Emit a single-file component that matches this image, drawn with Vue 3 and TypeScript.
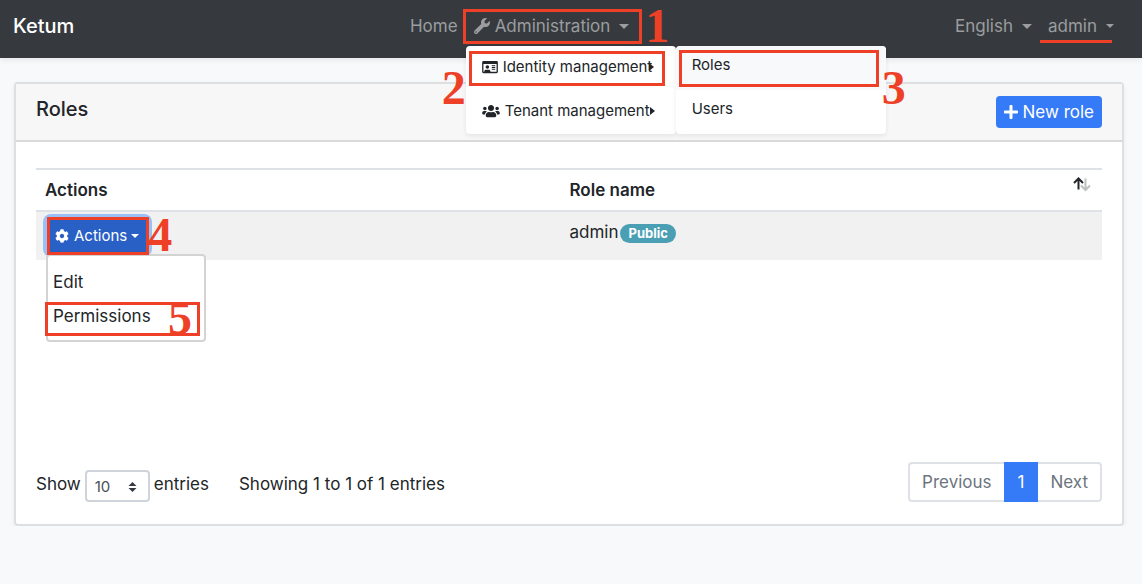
<script setup lang="ts">
import { ref } from 'vue'

const pageSize = ref('10')
const columns = ['Actions', 'Role name']

const icons = {
  wrench: {
    box: '0 0 512 512',
    d: 'M507.73 109.1c-2.24-9.03-13.54-12.09-20.12-5.51l-74.36 74.36-67.88-11.31-11.31-67.88 74.36-74.36c6.62-6.62 3.43-17.9-5.66-20.16-47.38-11.74-99.55.91-136.58 37.93-39.64 39.64-50.55 97.1-34.05 147.2L18.74 402.76c-24.99 24.99-24.99 65.51 0 90.5 24.99 24.99 65.51 24.99 90.5 0l213.21-213.21c50.12 16.71 107.47 5.68 147.37-34.22 37.07-37.07 49.7-89.32 37.91-136.73zM64 472c-13.25 0-24-10.75-24-24 0-13.26 10.75-24 24-24s24 10.74 24 24c0 13.25-10.75 24-24 24z',
  },
  card: {
    box: '0 0 576 512',
    d: 'M528 32H48C21.5 32 0 53.5 0 80v352c0 26.5 21.5 48 48 48h480c26.5 0 48-21.5 48-48V80c0-26.5-21.5-48-48-48zm0 400H303.2c.9-4.5.8 3.6.8-22.4 0-31.8-30.1-57.6-67.2-57.6-10.8 0-18.7 8-44.8 8-26.9 0-33.4-8-44.8-8-37.1 0-67.2 25.8-67.2 57.6 0 26-.2 17.9.8 22.4H48V144h480v288zm-168-80h112c4.4 0 8-3.6 8-8v-16c0-4.4-3.6-8-8-8H360c-4.4 0-8 3.6-8 8v16c0 4.4 3.6 8 8 8zm0-64h112c4.4 0 8-3.6 8-8v-16c0-4.4-3.6-8-8-8H360c-4.4 0-8 3.6-8 8v16c0 4.4 3.6 8 8 8zm0-64h112c4.4 0 8-3.6 8-8v-16c0-4.4-3.6-8-8-8H360c-4.4 0-8 3.6-8 8v16c0 4.4 3.6 8 8 8zm-168 96c35.3 0 64-28.7 64-64s-28.7-64-64-64-64 28.7-64 64 28.7 64 64 64z',
  },
  users: {
    box: '0 0 640 512',
    d: 'M96 224c35.3 0 64-28.7 64-64s-28.7-64-64-64-64 28.7-64 64 28.7 64 64 64zm448 0c35.3 0 64-28.7 64-64s-28.7-64-64-64-64 28.7-64 64 28.7 64 64 64zm32 32h-64c-17.6 0-33.5 7.1-45.1 18.6 40.3 22.1 68.9 62 75.1 109.4h66c17.7 0 32-14.3 32-32v-32c0-35.3-28.7-64-64-64zm-256 0c61.9 0 112-50.1 112-112S381.9 32 320 32 208 82.1 208 144s50.1 112 112 112zm76.8 32h-8.3c-20.8 10-43.9 16-68.5 16s-47.6-6-68.5-16h-8.3C179.6 288 128 339.6 128 403.2V432c0 26.5 21.5 48 48 48h288c26.5 0 48-21.5 48-48v-28.8c0-63.6-51.6-115.2-115.2-115.2zm-223.7-13.4C161.5 263.1 145.6 256 128 256H64c-35.3 0-64 28.7-64 64v32c0 17.7 14.3 32 32 32h65.9c6.3-47.4 34.9-87.3 75.2-109.4z',
  },
  plus: {
    box: '0 0 448 512',
    d: 'M416 208H272V64c0-17.67-14.33-32-32-32h-32c-17.67 0-32 14.33-32 32v144H32c-17.67 0-32 14.33-32 32v32c0 17.67 14.33 32 32 32h144v144c0 17.67 14.33 32 32 32h32c17.67 0 32-14.33 32-32V304h144c17.67 0 32-14.33 32-32v-32c0-17.67-14.33-32-32-32z',
  },
  cog: {
    box: '0 0 512 512',
    d: 'M487.4 315.7l-42.6-24.6c4.3-23.2 4.3-47 0-70.2l42.6-24.6c4.9-2.8 7.1-8.6 5.5-14-11.1-35.6-30-67.8-54.7-94.6-3.8-4.1-10-5.1-14.8-2.3L380.8 110c-17.9-15.4-38.5-27.3-60.8-35.1V25.8c0-5.6-3.9-10.5-9.4-11.7-36.7-8.2-74.3-7.8-109.2 0-5.5 1.2-9.4 6.1-9.4 11.7V75c-22.2 7.9-42.8 19.8-60.8 35.1L88.7 85.5c-4.9-2.8-11-1.9-14.8 2.3-24.7 26.7-43.6 58.9-54.7 94.6-1.7 5.4.6 11.2 5.5 14L67.3 221c-4.3 23.2-4.3 47 0 70.2l-42.6 24.6c-4.9 2.8-7.1 8.6-5.5 14 11.1 35.6 30 67.8 54.7 94.6 3.8 4.1 10 5.1 14.8 2.3l42.6-24.6c17.9 15.4 38.5 27.3 60.8 35.1v49.2c0 5.6 3.9 10.5 9.4 11.7 36.7 8.2 74.3 7.8 109.2 0 5.5-1.2 9.4-6.1 9.4-11.7v-49.2c22.2-7.9 42.8-19.8 60.8-35.1l42.6 24.6c4.9 2.8 11 1.9 14.8-2.3 24.7-26.7 43.6-58.9 54.7-94.6 1.5-5.5-.7-11.3-5.6-14.1zM256 336c-44.1 0-80-35.9-80-80s35.9-80 80-80 80 35.9 80 80-35.9 80-80 80z',
  },
}
</script>

<template>
  <div class="page">
    <nav class="navbar">
      <a class="brand" href="#">Ketum</a>
      <ul class="nav main-nav">
        <li><a class="nav-link" href="#">Home</a></li>
        <li>
          <a class="nav-link" href="#">
            <svg class="icon wrench" :viewBox="icons.wrench.box"><path :d="icons.wrench.d" /></svg>
            <span>Administration</span>
            <i class="caret"></i>
          </a>
          <span class="mark mark-1"></span>
          <b class="step step-1">1</b>
          <div class="menu">
            <div class="submenu-host">
              <a class="menu-item" href="#">
                <svg class="icon card-icon" :viewBox="icons.card.box"><path :d="icons.card.d" /></svg>
                <span>Identity management</span>
                <i class="caret-right overlap"></i>
              </a>
              <span class="mark mark-2"></span>
              <b class="step step-2">2</b>
              <div class="menu submenu">
                <a class="menu-item active" href="#">Roles<span class="mark mark-3"></span></a>
                <a class="menu-item" href="#">Users</a>
                <b class="step step-3">3</b>
              </div>
            </div>
            <a class="menu-item" href="#">
              <svg class="icon users-icon" :viewBox="icons.users.box"><path :d="icons.users.d" /></svg>
              <span>Tenant management</span>
              <i class="caret-right"></i>
            </a>
          </div>
        </li>
      </ul>
      <ul class="nav">
        <li><a class="nav-link" href="#"><span>English</span><i class="caret"></i></a></li>
        <li class="underlined"><a class="nav-link" href="#"><span>admin</span><i class="caret small"></i></a></li>
      </ul>
    </nav>

    <main class="content">
      <section class="card">
        <header class="card-header">
          <h1>Roles</h1>
          <button class="primary" type="button">
            <svg class="icon plus" :viewBox="icons.plus.box"><path :d="icons.plus.d" /></svg>
            <span>New role</span>
          </button>
        </header>
        <div class="card-body">
          <table>
            <thead>
              <tr>
                <th v-for="c in columns" :key="c" scope="col">
                  {{ c }}
                  <svg v-if="c === 'Role name'" class="sort" viewBox="0 0 20 16" fill="none" stroke-width="2">
                    <path d="M13.500 2.500v11M9 9.500l4.500 4.500l4.500-4.500" stroke="#bfc0c1" />
                    <path d="M6.500 13.500v-11M2 7l4.500-4.500l4.500 4.500" stroke="#212529" />
                  </svg>
                </th>
              </tr>
            </thead>
            <tbody>
              <tr>
                <td>
                  <div class="row-actions">
                    <button class="action-btn" type="button">
                      <svg class="icon cog" :viewBox="icons.cog.box"><path :d="icons.cog.d" /></svg>
                      <span>Actions</span>
                      <i class="caret small"></i>
                    </button>
                    <span class="mark mark-4"></span>
                    <b class="step step-4">4</b>
                    <div class="action-menu">
                      <a href="#">Edit</a>
                      <a class="marked" href="#">Permissions<span class="mark mark-5"></span><b class="step step-5">5</b></a>
                    </div>
                  </div>
                </td>
                <td class="role">admin<span class="badge">Public</span></td>
              </tr>
            </tbody>
          </table>
          <footer class="table-footer">
            <label class="length">
              <span class="length-text">Show</span>
              <span class="select-wrap">
                <select v-model="pageSize">
                  <option>10</option>
                  <option>25</option>
                  <option>50</option>
                </select>
                <svg viewBox="0 0 8 10"><path d="M4 0l4 4H0zM4 10L0 6h8z" /></svg>
              </span>
              <span class="length-text">entries</span>
            </label>
            <span class="info">Showing 1 to 1 of 1 entries</span>
            <div class="pagination">
              <button type="button">Previous</button>
              <button class="current" type="button">1</button>
              <button type="button">Next</button>
            </div>
          </footer>
        </div>
      </section>
    </main>
  </div>
</template>

<style>
body {
  background: #f8f9fb;
}
</style>

<style scoped>
.page,
.page * {
  box-sizing: border-box;
}
.page {
  font-family: Inter, 'Liberation Sans', sans-serif;
  font-size: 17px;
  line-height: 24px;
  color: #212529;
}
button,
select {
  font: inherit;
}
a {
  color: inherit;
  text-decoration: none;
}
.icon {
  fill: currentColor;
  flex: none;
}
.caret {
  flex: none;
  border: 5px solid transparent;
  border-top-color: currentColor;
  border-bottom: 0;
}
.caret.small {
  border-width: 4px;
  border-bottom: 0;
}
.caret-right {
  flex: none;
  border: 4px solid transparent;
  border-left: 5px solid currentColor;
  border-right: 0;
}
.caret-right.overlap {
  margin-left: -3px;
}

/* navigation */
.navbar {
  position: relative;
  z-index: 5;
  display: flex;
  align-items: center;
  height: 58px;
  padding: 0 20px 6px 13px;
  background: #363a3e;
  box-shadow: 0 2px 6px rgba(0, 0, 0, 0.08);
}
.brand {
  color: #fff;
  font-size: 20px;
  font-weight: 500;
}
.nav {
  display: flex;
  margin: 0;
  padding: 0;
  list-style: none;
}
.main-nav {
  margin: 0 auto;
  padding-left: 18px;
}
.nav li {
  position: relative;
}
.nav-link {
  display: flex;
  align-items: center;
  padding: 8px;
  color: #9b9d9f;
}
.nav-link .caret {
  margin-left: 9px;
}
.wrench {
  width: 16px;
  height: 16px;
  margin-right: 5px;
}
.underlined::after {
  content: '';
  position: absolute;
  left: 0;
  right: 10px;
  bottom: 3px;
  height: 3px;
  background: #ee4026;
}
.menu {
  position: absolute;
  top: 40px;
  left: 0;
  width: 210px;
  background: #fff;
  border-radius: 4px;
  color: #212529;
  box-shadow: 0 2px 5px rgba(0, 0, 0, 0.08);
}
.submenu {
  top: 0;
  left: 100%;
}
.menu-item {
  position: relative;
  display: flex;
  align-items: center;
  height: 44px;
  padding: 0 16px 2px;
  font-size: 15px;
  line-height: 20px;
  white-space: nowrap;
}
.submenu .menu-item {
  padding-bottom: 6px;
}
.menu-item.active {
  background: #f8f9fb;
  border-radius: 4px 4px 0 0;
}
.card-icon {
  width: 16px;
  height: 14px;
  margin-right: 5px;
}
.users-icon {
  width: 18px;
  height: 14px;
  margin-right: 5px;
}
.submenu-host {
  position: relative;
}

/* numbered annotations */
.mark {
  position: absolute;
  border: 3px solid #ee4026;
  pointer-events: none;
}
.mark-1 { inset: 3px -5px 2px -3px; }
.mark-2 { inset: 5px 11px 4px 3px; }
.mark-3 { inset: 4px 7px 3px 3px; }
.mark-4 { inset: -1px -1px -2px 0; }
.mark-5 { inset: 1px 4px -1px -3px; }
.step {
  position: absolute;
  color: #ee4026;
  font-family: 'Liberation Serif', serif;
  font-size: 48px;
  font-weight: 700;
  line-height: 46px;
}
.step-1 { left: 100%; top: -3px; margin-left: 8px; }
.step-2 { right: 100%; top: 19px; }
.step-3 { left: 100%; top: 19px; margin-left: -4px; }
.step-4 { left: 100%; top: -6px; }
.step-5 { right: 12px; top: -6px; }

/* card */
.content {
  padding: 24px 18px 0 14px;
}
.card {
  background: #fff;
  border: 2px solid #dedfe0;
  border-radius: 4px;
  box-shadow: 0 2px 5px rgba(0, 0, 0, 0.06);
}
.card-header {
  display: flex;
  justify-content: space-between;
  align-items: flex-start;
  padding: 12px 20px;
  background: #f7f7f7;
  border-bottom: 2px solid #d8d9da;
}
h1 {
  margin: 0;
  font-size: 20px;
  line-height: 26px;
  font-weight: 500;
}
.primary {
  display: flex;
  align-items: center;
  height: 32px;
  padding: 0 8px;
  border: 0;
  border-radius: 4px;
  background: #357af6;
  color: #fff;
}
.plus {
  width: 14px;
  height: 16px;
  margin-right: 5px;
}
.card-body {
  padding: 26px 20px 22px;
}
table {
  width: 100%;
  border-collapse: collapse;
  table-layout: fixed;
}
th {
  position: relative;
  height: 42px;
  padding: 0 9px;
  border-top: 2px solid #dee2e6;
  border-bottom: 2px solid #dee2e6;
  text-align: left;
  font-weight: 600;
}
th:first-child {
  width: 49.2%;
}
.sort {
  position: absolute;
  right: 10px;
  top: 6px;
  width: 20px;
  height: 16px;
}
td {
  height: 49px;
  padding: 6px 9px 4px;
  background: #f1f1f1;
  vertical-align: top;
}
td.role {
  padding-top: 8px;
}
.badge {
  display: inline-block;
  height: 19px;
  margin-left: 2px;
  padding: 0 8px;
  border-radius: 10px;
  background: #4b9fb5;
  color: #fff;
  font-size: 13px;
  line-height: 18px;
  font-weight: 700;
}
.row-actions {
  position: relative;
  width: max-content;
  margin-left: 2px;
}
.action-btn {
  display: flex;
  align-items: center;
  height: 35px;
  padding: 0 9px 0 8px;
  border: 0;
  border-radius: 4px;
  background: #2860c6;
  box-shadow: 0 0 0 4px #9ac0f8;
  color: #fff;
  font-size: 15px;
}
.cog {
  width: 14px;
  height: 14px;
  margin-right: 5px;
}
.action-btn .caret {
  margin-left: 4px;
}
.action-menu {
  position: absolute;
  z-index: 1;
  top: 36px;
  left: -1px;
  width: 160px;
  padding: 9px 0 5px;
  background: #fff;
  border: 2px solid #d3d3d3;
  border-radius: 4px;
}
.mark-4,
.step-4 {
  z-index: 2;
}
.action-menu a {
  position: relative;
  display: block;
  height: 36px;
  padding: 5px;
}
.action-menu .marked {
  height: 34px;
  padding-top: 3px;
}
.table-footer {
  display: flex;
  align-items: flex-end;
  margin-top: 202px;
}
.length {
  display: flex;
  align-items: center;
  gap: 4px;
  margin-right: 30px;
}
.length-text {
  padding-bottom: 4px;
}
.info {
  padding-bottom: 6px;
}
.select-wrap {
  position: relative;
  display: flex;
}
select {
  appearance: none;
  width: 65px;
  height: 32px;
  padding: 2px 8px 0;
  border: 2px solid #ced4da;
  border-radius: 4px;
  background: #fff;
  color: #495057;
  font-size: 15px;
}
.select-wrap svg {
  position: absolute;
  right: 13px;
  top: 12px;
  width: 9px;
  height: 10px;
  fill: #343a40;
  pointer-events: none;
}
.pagination {
  display: flex;
  margin-left: auto;
}
.pagination button {
  height: 40px;
  padding: 0 12px;
  border: 2px solid #dee2e6;
  background: #fff;
  color: #6c757d;
}
.pagination button:first-child {
  border-right: 0;
  border-radius: 4px 0 0 4px;
}
.pagination button:last-child {
  border-left: 0;
  border-radius: 0 4px 4px 0;
}
.pagination .current {
  padding: 0 14px;
  border: 0;
  background: #357af6;
  color: #fff;
}
</style>
